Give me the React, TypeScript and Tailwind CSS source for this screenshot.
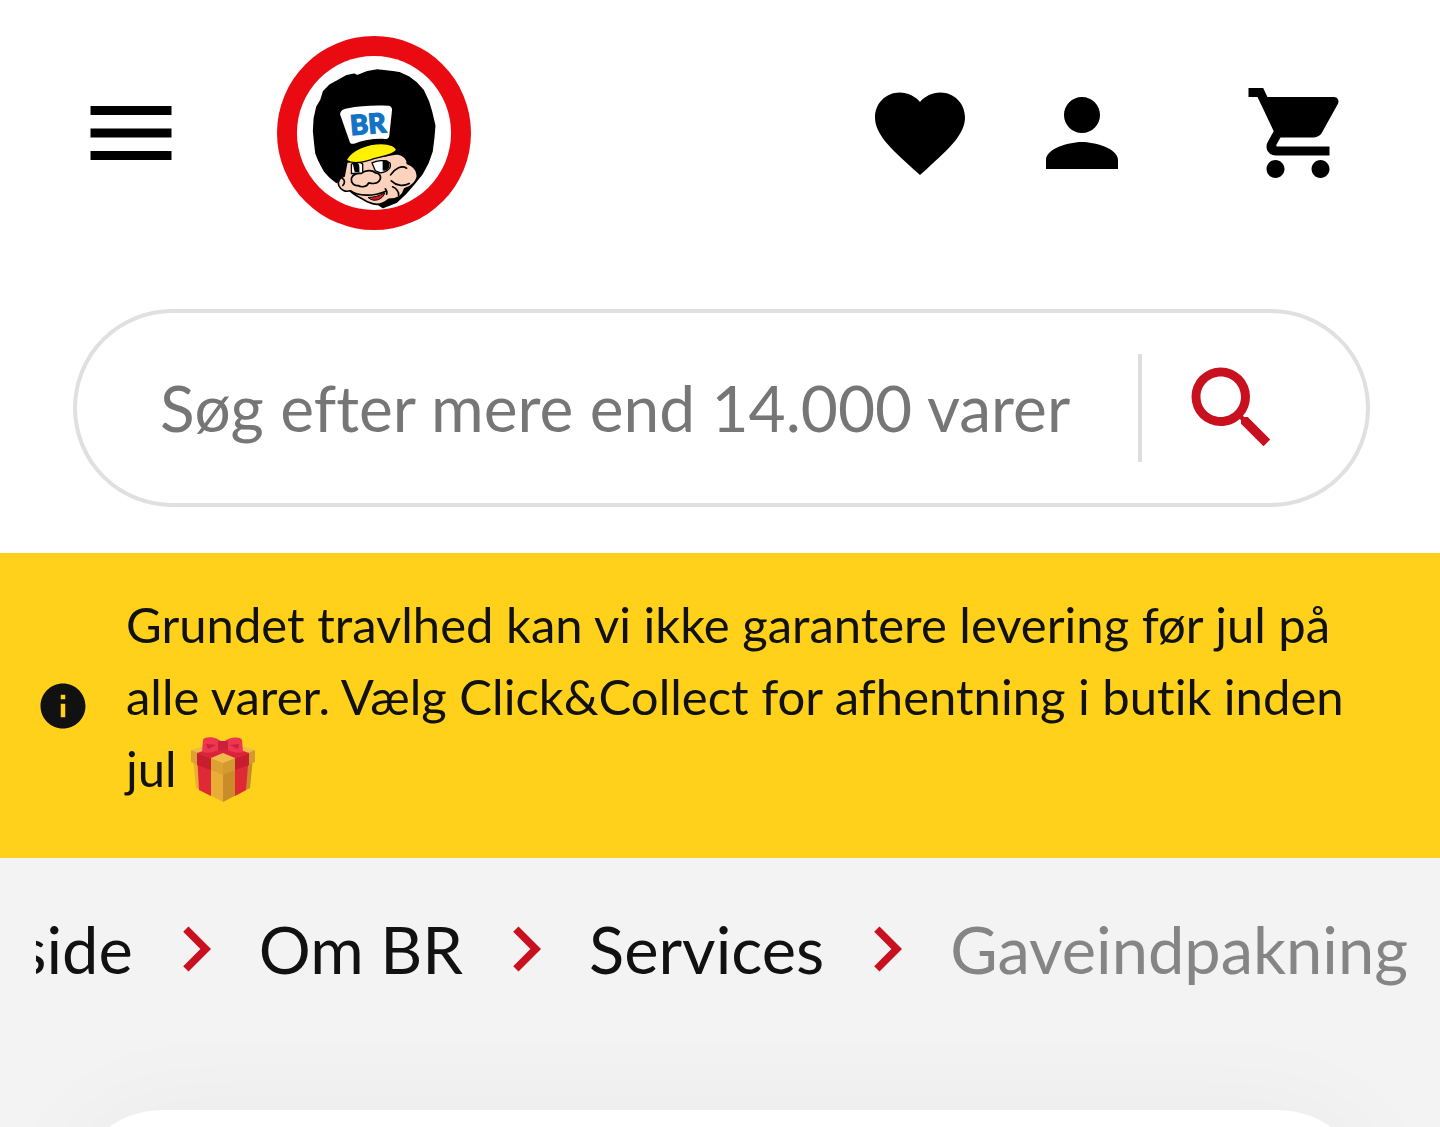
import {
  MdChevronRight,
  MdFavorite,
  MdInfo,
  MdMenu,
  MdPerson,
  MdSearch,
  MdShoppingCart,
} from "react-icons/md";

const crumbs = [
  { label: "Forside", href: "#forside" },
  { label: "Om BR", href: "#om-br" },
  { label: "Services", href: "#services" },
];

function Logo() {
  return (
    <svg viewBox="22 18 584 584" className="h-[194px] w-[194px]" aria-hidden="true">
      <circle cx="314" cy="310" r="292" fill="#ea0a12" />
      <circle cx="314" cy="310" r="232" fill="#fff" />
      {/* hair */}
      <path
        fill="#000"
        stroke="#000"
        strokeWidth="4"
        strokeLinejoin="round"
        d="M232 137l22-4 10 4 30-12 30-5 46 5 20 3 28 13 24 18 20 22 16 34 9 30 10 42-3 38-5 40-12 34-18 34-24 30-26 30-28 26-40 16-90-60-30-24-20 8-18-14-18-20-10-18-8-16-8-20-3-26-4-40 2-38 8-36 12-20 8-26 20-20 22-12z"
      />
      {/* face */}
      <path
        fill="#fbd3bd"
        stroke="#000"
        strokeWidth="5"
        strokeLinejoin="round"
        d="M232 398l-8 42c-14 4-20 16-16 28 6 14 20 20 34 16 14 14 34 22 54 34 24 12 46 6 62-8 28 0 44-14 48-32 22-6 42-26 38-44-2-16-14-26-30-32 2-14-10-26-30-30z"
      />
      <path
        fill="#fff"
        stroke="#000"
        strokeWidth="4"
        d="M246 404c10-8 30-8 34 0v28h-34zM308 400c12-6 40-12 54 0 6 14-8 28-28 30l-16-6z"
      />
      <path d="M250 402c8-6 20-4 20 10v16h-14zM340 392c14-4 24 6 20 20-4 10-12 14-20 10z" fill="#000" />
      <path
        fill="#fbd3bd"
        stroke="#000"
        strokeWidth="5"
        strokeLinecap="round"
        strokeLinejoin="round"
        d="M246 446c4-12 18-16 30-14 10-10 32-12 42-2 14 0 20 14 12 24-8 12-24 8-32 6-6 14-24 14-32 8-12 2-22-8-20-22z"
      />
      <path
        fill="none"
        stroke="#000"
        strokeWidth="5"
        strokeLinecap="round"
        d="M218 446c8 4 10 14 2 22M244 484c22 16 66 18 104 2M348 478c4 4 6 10 4 16M364 436c14-20 34-30 48-20M366 454c14 14 36 18 54 8M370 472c10 4 20 14 18 26"
      />
      <path fill="#dd1b22" stroke="#000" strokeWidth="3" d="M296 504c16 0 34-4 50-14-2 18-32 32-50 14z" />
      {/* cap */}
      <path
        fill="#fff100"
        stroke="#000"
        strokeWidth="4"
        d="M230 392c16-32 64-50 106-50 26 0 44 8 46 20-14 18-50 18-76 28-30 10-56 14-76 2z"
      />
      <path
        fill="#fff"
        d="M212 254c0-10 8-16 20-18 40-8 84-10 124-8 8 0 14 6 12 16l-8 74c-1 8-6 10-14 10-30-2-64 4-92 14-8 2-12 0-14-8z"
      />
      <text
        x="245"
        y="317"
        fill="#1373c4"
        stroke="#1373c4"
        strokeWidth="4"
        fontFamily="Lato, sans-serif"
        fontSize="82"
        fontWeight="900"
        transform="rotate(-5 245 317)"
      >
        BR
      </text>
    </svg>
  );
}

function Gift() {
  return (
    <svg viewBox="0 0 68 68" className="-mb-[17px] inline-block size-[68px] align-baseline" role="img" aria-label="Gave">
      <path fill="#e9ad37" d="M4 22l30 12v32L7 52z" />
      <path fill="#c98c28" d="M64 22L34 34v32l27-14z" />
      <path fill="#efb94c" d="M2 14L34 4l32 10-32 13z" />
      <path fill="#dda133" d="M2 14l32 13v12L2 26z" />
      <path fill="#d49a30" d="M66 14L34 27v12l32-13z" />
      <path fill="#df2935" d="M8 17l14 5v38l-12-6zM60 17l-14 5v38l11-6z" />
      <path fill="#c81d2d" d="M8 17l14 5v12L8 29zM60 17l-14 5v12l14-5z" />
      <path fill="#d9233a" d="M8 17l26-9 26 9-14 5-12-5-12 5z" />
      <path fill="#ee3650" d="M34 7c-6-7-19-7-20-3l-1 12c6 2 15 0 21-5 6 5 15 7 20 5L53 4c-2-4-14-3-19 3z" />
      <path fill="#c9203d" d="M29 5h10v9H29zM17 8l10 1-8 4zM50 8l-9 1 8 4z" />
    </svg>
  );
}

export default function App() {
  return (
    <div className="flex h-screen flex-col overflow-hidden bg-white font-[Lato,sans-serif] text-[#111] [font-variant-ligatures:none]">
      <header className="pt-9 pr-[70px] pb-[46px] pl-[73px]">
        <div className="flex items-center justify-between pr-[18px] pl-1">
          <div className="flex items-center gap-[92px]">
            <button type="button" aria-label="Menu">
              <MdMenu className="size-[108px] text-black" />
            </button>
            <a href="#forside" aria-label="BR">
              <Logo />
            </a>
          </div>
          <div className="flex items-center text-black">
            <button type="button" aria-label="Favoritter" className="mr-[54px]">
              <MdFavorite className="size-[108px]" />
            </button>
            <button type="button" aria-label="Min konto" className="mr-[108px]">
              <MdPerson className="size-[108px]" />
            </button>
            <button type="button" aria-label="Kurv">
              <MdShoppingCart className="size-[108px]" />
            </button>
          </div>
        </div>

        <form
          role="search"
          onSubmit={(e) => e.preventDefault()}
          className="mt-[79px] flex h-[198px] items-center rounded-full border-4 border-[#e0e0e0] pr-20 pl-[83px]"
        >
          <input
            type="text"
            aria-label="Søg"
            placeholder="Søg efter mere end 14.000 varer"
            className="min-w-0 flex-1 text-[64px] leading-[80px] outline-none placeholder:text-[#767676]"
          />
          <div className="h-[108px] w-1 bg-[#dedede]" />
          <button type="submit" aria-label="Søg" className="ml-9">
            <MdSearch className="size-[108px] text-[#c8101e]" />
          </button>
        </form>
      </header>

      <section className="flex items-center gap-9 bg-[#ffd11a] pr-[60px] pl-9">
        <MdInfo className="size-[54px] shrink-0 text-[#111]" />
        <p className="pt-[35px] pb-[54px] text-[49px] leading-[72px]">
          Grundet travlhed kan vi ikke garantere levering før jul på alle varer. Vælg Click&amp;Collect for afhentning i
          butik inden jul <Gift />
        </p>
      </section>

      <main className="flex-1 overflow-hidden bg-[#f3f3f3]">
        <nav aria-label="Brødkrumme" className="mr-8 ml-9 overflow-hidden pt-[46px]">
          <ol className="flex items-center justify-end text-[65px] leading-[80px] whitespace-nowrap">
            {crumbs.map((c) => (
              <li key={c.label} className="flex items-center">
                <a href={c.href}>{c.label}</a>
                <MdChevronRight className="mx-[18px] size-[90px] text-[#c8101e]" />
              </li>
            ))}
            <li className="text-[#858585]" aria-current="page">
              Gaveindpakning
            </li>
          </ol>
        </nav>
        <div className="mx-[72px] mt-[116px] h-[360px] rounded-t-[90px] bg-white shadow-[0_0_108px_rgba(0,0,0,0.04)]" />
      </main>
    </div>
  );
}
